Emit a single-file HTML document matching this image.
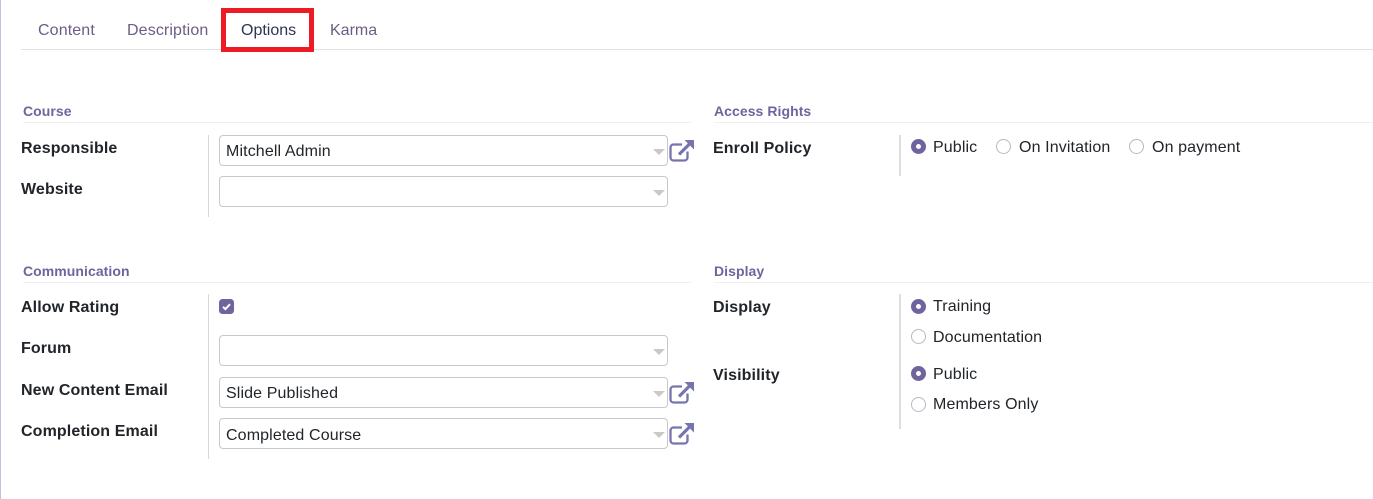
<!DOCTYPE html>
<html><head><meta charset="utf-8">
<style>
html,body{margin:0;padding:0;background:#fff}
body{position:relative;width:1373px;height:499px;overflow:hidden;font-family:"Liberation Sans",Arial,sans-serif;font-size:16px;color:#212529;letter-spacing:.12px}
.a{position:absolute;white-space:nowrap;line-height:20px}
.tab{color:#6c5d85;top:21px}
.h{font-weight:bold;font-size:14px;color:#71639e;line-height:16px;letter-spacing:.06px}
.hr{position:absolute;height:1px;background:#f0f0f2}
.l{font-weight:bold}
.v{position:absolute;width:2px;background:#dedede}
.v1{position:absolute;width:1px;background:#d9d9d9}
.s{position:absolute;left:219px;width:447px;height:29px;border:1px solid #c8c8c8;border-radius:4px;line-height:29px;background:#fff}
.s span{position:absolute;left:6px;top:1px}
.s:after{content:"";position:absolute;right:2px;top:13px;border-left:6px solid transparent;border-right:6px solid transparent;border-top:6px solid #c9c9c9}
.r{position:absolute;width:15px;height:15px;border-radius:50%;box-sizing:border-box;border:1px solid #b8b8c4;background:#fff}
.r.on{border:5px solid #71639e}
svg.e{position:absolute;width:26px;height:24px;left:669px}
</style></head><body>
<div style="position:absolute;left:0;top:0;width:1px;height:499px;background:#c5c1dc"></div>

<div class="a tab" style="left:38px">Content</div>
<div class="a tab" style="left:127px">Description</div>
<div class="a" style="left:241px;top:21px;color:#2f3550;letter-spacing:0">Options</div>
<div class="a tab" style="left:330px;letter-spacing:0">Karma</div>
<div style="position:absolute;left:21px;top:49px;width:1352px;height:1px;background:#dee2e6"></div>
<div style="position:absolute;left:221px;top:8px;width:83px;height:34px;border:5px solid #ed1c24"></div>

<div class="a h" style="left:23px;top:103px">Course</div>
<div class="hr" style="left:23px;top:122px;width:668px"></div>
<div class="a h" style="left:714px;top:103px">Access Rights</div>
<div class="hr" style="left:714px;top:122px;width:659px"></div>
<div class="a h" style="left:23px;top:263px">Communication</div>
<div class="hr" style="left:23px;top:282px;width:668px"></div>
<div class="a h" style="left:714px;top:263px">Display</div>
<div class="hr" style="left:714px;top:282px;width:659px"></div>

<div class="v1" style="left:208px;top:135px;height:82px"></div>
<div class="v1" style="left:208px;top:294px;height:165px"></div>
<div class="v" style="left:899px;top:135px;height:41px"></div>
<div class="v" style="left:899px;top:294px;height:135px"></div>

<div class="a l" style="left:21px;top:139px">Responsible</div>
<div class="a l" style="left:21px;top:180px">Website</div>
<div class="a l" style="left:21px;top:298px">Allow Rating</div>
<div class="a l" style="left:21px;top:339px">Forum</div>
<div class="a l" style="left:21px;top:381px">New Content Email</div>
<div class="a l" style="left:21px;top:422px">Completion Email</div>
<div class="a l" style="left:713px;top:139px">Enroll Policy</div>
<div class="a l" style="left:713px;top:298px">Display</div>
<div class="a l" style="left:713px;top:366px">Visibility</div>

<div class="s" style="top:135px"><span>Mitchell Admin</span></div>
<div class="s" style="top:176px"></div>
<div class="s" style="top:335px"></div>
<div class="s" style="top:377px"><span>Slide Published</span></div>
<div class="s" style="top:418px"><span style="top:2px">Completed Course</span></div>

<svg class="e" style="top:139px" viewBox="0 0 26 24"><g fill="none" stroke="#7674ad"><path d="M13 5.5H4.500a3 3 0 0 0-3 3v10a3 3 0 0 0 3 3h11a3 3 0 0 0 3-3v-6" stroke-width="2.300"/><path d="M10 15.500L21 4.500" stroke-width="3.200"/></g><path d="M15.500 1H25v9.500z" fill="#7674ad"/></svg>
<svg class="e" style="top:381px" viewBox="0 0 26 24"><g fill="none" stroke="#7674ad"><path d="M13 5.5H4.500a3 3 0 0 0-3 3v10a3 3 0 0 0 3 3h11a3 3 0 0 0 3-3v-6" stroke-width="2.300"/><path d="M10 15.500L21 4.500" stroke-width="3.200"/></g><path d="M15.500 1H25v9.500z" fill="#7674ad"/></svg>
<svg class="e" style="top:422px" viewBox="0 0 26 24"><g fill="none" stroke="#7674ad"><path d="M13 5.5H4.500a3 3 0 0 0-3 3v10a3 3 0 0 0 3 3h11a3 3 0 0 0 3-3v-6" stroke-width="2.300"/><path d="M10 15.500L21 4.500" stroke-width="3.200"/></g><path d="M15.500 1H25v9.500z" fill="#7674ad"/></svg>

<svg style="position:absolute;left:219px;top:299px" width="15" height="15" viewBox="0 0 15 15"><rect width="15" height="15" rx="3.500" fill="#71639e"/><path d="M4 7.800l2.400 2.300L11 5.200" fill="none" stroke="#fff" stroke-width="2"/></svg>

<div class="r on" style="left:911px;top:139px"></div>
<div class="a" style="left:933px;top:138px">Public</div>
<div class="r" style="left:996px;top:139px"></div>
<div class="a" style="left:1019px;top:138px">On Invitation</div>
<div class="r" style="left:1129px;top:139px"></div>
<div class="a" style="left:1152px;top:138px">On payment</div>

<div class="r on" style="left:911px;top:299px"></div>
<div class="a" style="left:933px;top:297px">Training</div>
<div class="r" style="left:911px;top:329px"></div>
<div class="a" style="left:933px;top:328px">Documentation</div>
<div class="r on" style="left:911px;top:366px"></div>
<div class="a" style="left:933px;top:365px">Public</div>
<div class="r" style="left:911px;top:397px"></div>
<div class="a" style="left:933px;top:395px">Members Only</div>
</body></html>
